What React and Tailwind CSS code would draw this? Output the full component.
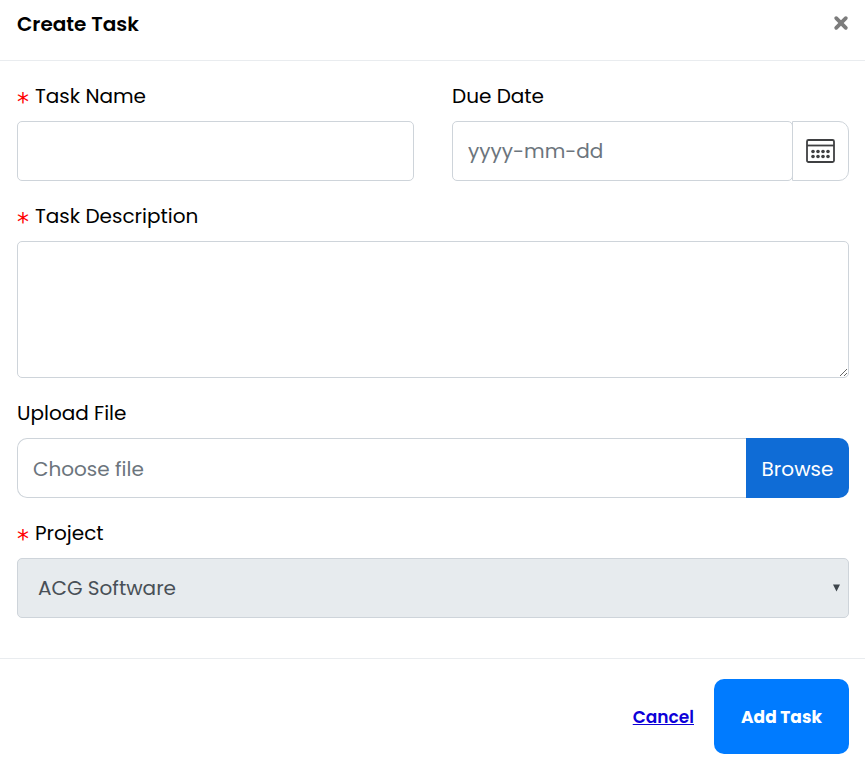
import React from "react";

const labelText = "flex h-[30px] items-center text-[20px] leading-[30px] text-black";
const box = "w-full rounded-[5px] border border-[#ced4da] bg-white text-[20px] text-[#495057] outline-none";

function FieldLabel({ htmlFor, required, children }) {
  return (
    <label htmlFor={htmlFor} className={labelText}>
      {required && (
        <span className="mr-[7px] w-[11px] pt-3 text-center font-['DejaVu_Sans',sans-serif] text-[24px] leading-[30px] text-[#ff0000]">
          *
        </span>
      )}
      {children}
    </label>
  );
}

function CalendarIcon() {
  const columns = [7, 12, 17, 22];
  return (
    <svg width="30" height="26" viewBox="0 0 30 26" fill="none" aria-hidden="true">
      <rect x="1" y="2" width="27" height="22" rx="1.5" stroke="#3f4042" strokeWidth="1.8" />
      <path d="M1 7.5h27" stroke="#3f4042" strokeWidth="1.8" />
      {columns.map((x) => (
        <React.Fragment key={x}>
          <circle cx={x} cy="13.5" r="1.8" fill="#3f4042" />
          <circle cx={x} cy="18.5" r="1.8" fill="#3f4042" />
        </React.Fragment>
      ))}
    </svg>
  );
}

export default function App() {
  return (
    <form
      className="w-full bg-white font-['Poppins','Inter',sans-serif] text-black"
      onSubmit={(e) => e.preventDefault()}
    >
      <header className="flex h-[61px] items-start justify-between border-b border-[#e9ecef] pt-[9px] pr-4 pl-[17px]">
        <h1 className="text-[20px] leading-[30px] font-semibold">Create Task</h1>
        <button type="button" aria-label="Close" className="flex h-7 w-4 items-center justify-center">
          <svg width="16" height="16" viewBox="0 0 16 16" aria-hidden="true">
            <path d="M3.2 3.2l9.6 9.6M12.8 3.2l-9.6 9.6" stroke="#7c7c7c" strokeWidth="3.8" strokeLinecap="round" />
          </svg>
        </button>
      </header>

      <main className="flex flex-col gap-5 pt-5 pr-4 pb-10 pl-[17px]">
        <div className="grid grid-cols-2 gap-[38px]">
          <div className="flex flex-col gap-[10px]">
            <FieldLabel htmlFor="name" required>Task Name</FieldLabel>
            <input id="name" type="text" className={`${box} h-[60px] px-[15px]`} />
          </div>
          <div className="flex flex-col gap-[10px]">
            <FieldLabel htmlFor="due">Due Date</FieldLabel>
            <div className="flex h-[60px]">
              <input
                id="due"
                type="text"
                placeholder="yyyy-mm-dd"
                className={`${box} min-w-0 flex-1 px-[15px] placeholder:text-[#6c757d]`}
              />
              <button
                type="button"
                aria-label="Open calendar"
                className="-ml-px flex w-[57px] shrink-0 items-center justify-center rounded-r-[10px] border border-[#ced4da] bg-white"
              >
                <CalendarIcon />
              </button>
            </div>
          </div>
        </div>

        <div className="flex flex-col gap-[10px]">
          <FieldLabel htmlFor="description" required>Task Description</FieldLabel>
          <textarea id="description" className={`${box} block h-[137px] resize-y px-[15px] py-3`} />
        </div>

        <div className="flex flex-col gap-[10px]">
          <FieldLabel htmlFor="file">Upload File</FieldLabel>
          <div className="relative flex h-[60px] text-[20px]">
            <span className="flex flex-1 items-center rounded-l-[10px] border border-r-0 border-[#ced4da] px-[15px] pt-0.5 text-[#6c757d]">
              Choose file
            </span>
            <span className="flex w-[103px] items-center justify-center rounded-r-[10px] bg-[#0f6cd6] pt-0.5 text-white">
              Browse
            </span>
            <input id="file" type="file" className="absolute inset-0 h-full w-full cursor-pointer opacity-0" />
          </div>
        </div>

        <div className="flex flex-col gap-[10px]">
          <FieldLabel htmlFor="project" required>Project</FieldLabel>
          <div className="relative">
            <select
              id="project"
              disabled
              className="h-[60px] w-full appearance-none rounded-[5px] border border-[#ced4da] bg-[#e7ebee] px-5 text-[20px] text-[#495057] opacity-100"
            >
              <option>ACG Software</option>
            </select>
            <svg className="pointer-events-none absolute top-[26px] right-[9px]" width="7" height="8" viewBox="0 0 7 8" aria-hidden="true">
              <path d="M0 .5h7L3.5 7.5z" fill="#3f464c" />
            </svg>
          </div>
        </div>
      </main>

      <footer className="flex items-center justify-end gap-5 border-t border-[#e9ecef] pt-5 pr-4 pb-3">
        <a href="#cancel" className="pt-0.5 text-[17px] font-semibold text-[#0d00d8] underline">
          Cancel
        </a>
        <button type="submit" className="h-[75px] w-[135px] rounded-[10px] bg-[#007bff] pt-0.5 text-[17px] font-bold text-white">
          Add Task
        </button>
      </footer>
    </form>
  );
}
